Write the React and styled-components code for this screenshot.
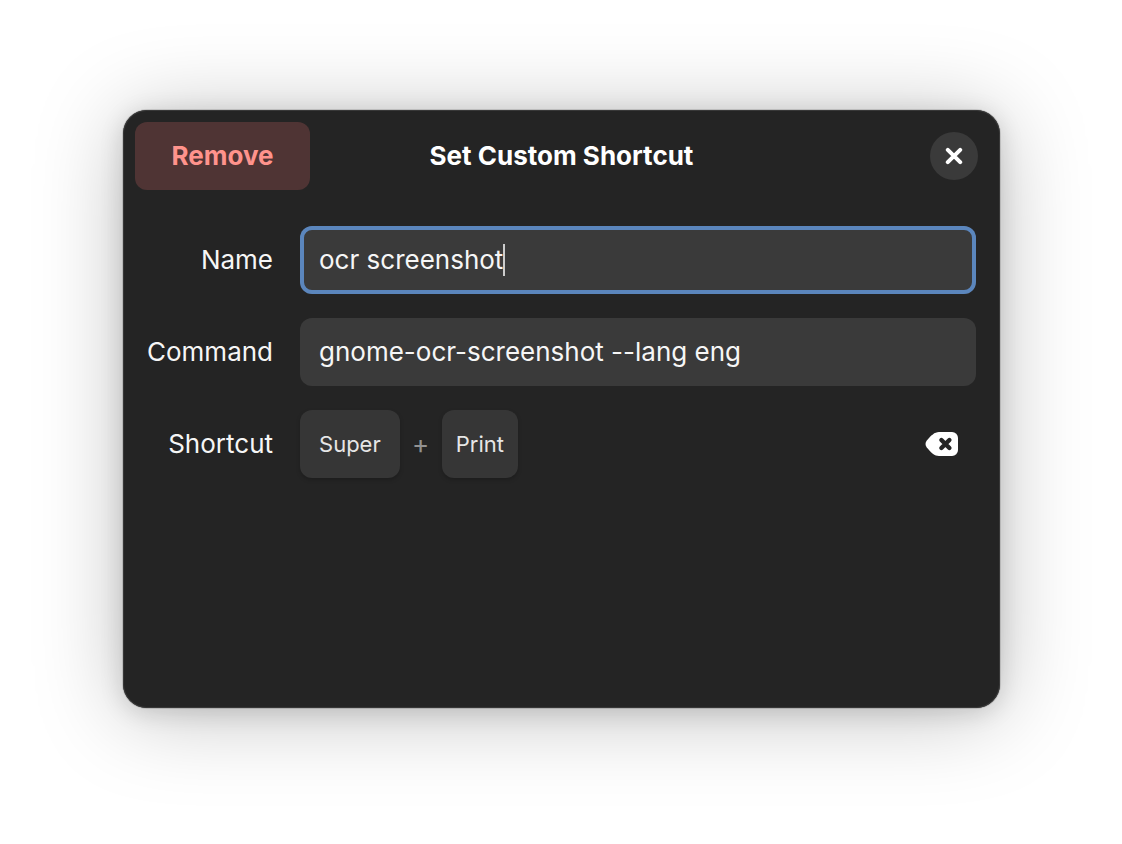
import React, { useState } from "react";
import styled, { createGlobalStyle } from "styled-components";

const GlobalStyle = createGlobalStyle`
  * { box-sizing: border-box; }
  body {
    margin: 0;
    background: #ffffff;
    font-family: Inter, "Noto Sans", sans-serif;
    font-size: 26px;
    line-height: 32px;
    color: #f6f6f6;
  }
  button, input { font: inherit; color: inherit; }
`;

const Page = styled.main`
  min-height: 100vh;
  padding: 110px 122px 136px 123px;
  display: flex;
`;

const Dialog = styled.section`
  flex: 1;
  min-width: 0;
  background: #242424;
  border-radius: 24px;
  box-shadow:
    inset 0 0 0 1px #383838,
    0 0 0 1px rgba(0, 0, 0, 0.12),
    0 4px 24px rgba(0, 0, 0, 0.14),
    0 6px 88px rgba(0, 0, 0, 0.25);
`;

const HeaderBar = styled.header`
  display: grid;
  grid-template-columns: 1fr auto 1fr;
  align-items: center;
  padding: 12px;
`;

const RemoveButton = styled.button`
  justify-self: start;
  height: 68px;
  min-width: 175px;
  padding: 0 32px;
  border: 0;
  border-radius: 12px;
  background: #4f3434;
  color: #ff938c;
  font-weight: 700;
`;

const Title = styled.h1`
  margin: 0;
  font-size: 26px;
  font-weight: 700;
  color: #ffffff;
`;

const CloseButton = styled.button`
  justify-self: end;
  width: 48px;
  height: 48px;
  margin-right: 10px;
  padding: 0;
  border: 0;
  border-radius: 50%;
  background: #3a3a3a;
  color: #ffffff;
  display: grid;
  place-items: center;
`;

const Form = styled.form`
  display: grid;
  grid-template-columns: auto 1fr;
  gap: 24px 27px;
  align-items: center;
  padding: 24px;
`;

const Label = styled.label`
  text-align: right;
`;

const Field = styled.div`
  display: flex;
  align-items: center;
  min-width: 0;
  height: 68px;
  padding: 0 19px;
  border-radius: 12px;
  background: #3a3a3a;
  box-shadow: ${(p) => (p.$focused ? "inset 0 0 0 4px #5b86bd" : "none")};
`;

const Entry = styled.input`
  field-sizing: content;
  max-width: 100%;
  padding: 0;
  border: 0;
  outline: 0;
  background: transparent;
  caret-color: transparent;
`;

const Caret = styled.span`
  width: 2px;
  height: 32px;
  background: #cccccc;
`;

const Shortcut = styled.div`
  display: flex;
  align-items: center;
  height: 68px;
  padding-right: 17px;
`;

const Key = styled.kbd`
  display: flex;
  align-items: center;
  height: 68px;
  padding: 0 ${(p) => (p.$wide ? 19 : 14)}px;
  border-radius: 12px;
  background: #363636;
  box-shadow: 0 2px 4px rgba(0, 0, 0, 0.2);
  color: #e6e6e6;
  font-family: inherit;
  font-size: 22px;
`;

const Plus = styled.span`
  width: 42px;
  text-align: center;
  color: #929292;
`;

const ClearButton = styled.button`
  margin-left: auto;
  padding: 0;
  border: 0;
  background: transparent;
  color: #ffffff;
  display: flex;
`;

export default function App() {
  const [name, setName] = useState("ocr screenshot");
  const [command, setCommand] = useState("gnome-ocr-screenshot --lang eng");

  return (
    <>
      <GlobalStyle />
      <Page>
        <Dialog role="dialog" aria-labelledby="dialog-title">
          <HeaderBar>
            <RemoveButton type="button">Remove</RemoveButton>
            <Title id="dialog-title">Set Custom Shortcut</Title>
            <CloseButton type="button" aria-label="Close">
              <svg width="18" height="18" viewBox="0 0 18 18" fill="none" stroke="currentColor" strokeWidth="4" strokeLinecap="round">
                <path d="M2.8 2.8 15.2 15.2M15.2 2.8 2.8 15.2" />
              </svg>
            </CloseButton>
          </HeaderBar>
          <Form>
            <Label htmlFor="name">Name</Label>
            <Field $focused>
              <Entry id="name" value={name} onChange={(e) => setName(e.target.value)} />
              <Caret aria-hidden="true" />
            </Field>
            <Label htmlFor="command">Command</Label>
            <Field>
              <Entry id="command" value={command} onChange={(e) => setCommand(e.target.value)} />
            </Field>
            <Label htmlFor="clear-shortcut">Shortcut</Label>
            <Shortcut>
              <Key $wide>Super</Key>
              <Plus>+</Plus>
              <Key>Print</Key>
              <ClearButton id="clear-shortcut" type="button" aria-label="Clear shortcut">
                <svg width="34" height="24" viewBox="0 0 34 24">
                  <path
                    fill="currentColor"
                    d="M14 0H27A6 6 0 0 1 33 6V18A6 6 0 0 1 27 24H14C9.500 24 6 20.500 1.800 15.500Q-.8 12 1.800 8.500C6 3.500 9.500 0 14 0Z"
                  />
                  <path d="M16.400 8 24.400 16M24.400 8 16.400 16" stroke="#242424" strokeWidth="4.400" strokeLinecap="round" />
                </svg>
              </ClearButton>
            </Shortcut>
          </Form>
        </Dialog>
      </Page>
    </>
  );
}
